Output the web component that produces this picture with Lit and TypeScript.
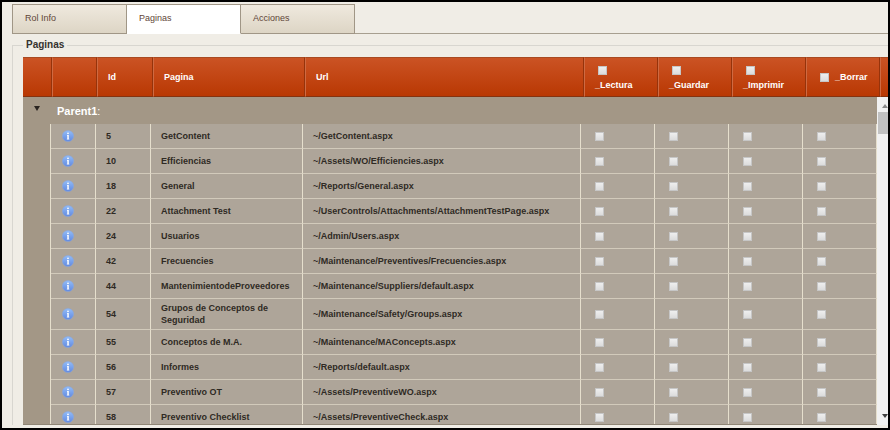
import { LitElement, html, css, svg } from "lit";
import { customElement, state } from "lit/decorators.js";

interface Page { id: number; name: string; url: string }

const PAGES: Page[] = [
  { id: 5, name: "GetContent", url: "~/GetContent.aspx" },
  { id: 10, name: "Efficiencias", url: "~/Assets/WO/Efficiencies.aspx" },
  { id: 18, name: "General", url: "~/Reports/General.aspx" },
  { id: 22, name: "Attachment Test", url: "~/UserControls/Attachments/AttachmentTestPage.aspx" },
  { id: 24, name: "Usuarios", url: "~/Admin/Users.aspx" },
  { id: 42, name: "Frecuencies", url: "~/Maintenance/Preventives/Frecuencies.aspx" },
  { id: 44, name: "MantenimientodeProveedores", url: "~/Maintenance/Suppliers/default.aspx" },
  { id: 54, name: "Grupos de Conceptos de Seguridad", url: "~/Maintenance/Safety/Groups.aspx" },
  { id: 55, name: "Conceptos de M.A.", url: "~/Maintenance/MAConcepts.aspx" },
  { id: 56, name: "Informes", url: "~/Reports/default.aspx" },
  { id: 57, name: "Preventivo OT", url: "~/Assets/PreventiveWO.aspx" },
  { id: 58, name: "Preventivo Checklist", url: "~/Assets/PreventiveCheck.aspx" },
];

const RIGHTS = ["_Lectura", "_Guardar", "_Imprimir", "_Borrar"];
const TABS = ["Rol Info", "Paginas", "Acciones"];

const infoIcon = html`<svg class="info" viewBox="0 0 12 12" aria-hidden="true">
  ${svg`<defs><linearGradient id="g" x1="0" y1="0" x2="0" y2="1">
    <stop offset="0" stop-color="#93bdf8" /><stop offset="1" stop-color="#6189e0" />
  </linearGradient></defs>
  <circle cx="6" cy="6" r="5.6" fill="url(#g)" stroke="#86a6e0" stroke-width="0.5" />
  <circle cx="6" cy="3.3" r="0.9" fill="#fff" />
  <path d="M5 5h1.800v3.800h.5v.7H4.800v-.7h.5V5.700H5z" fill="#fff" />`}
</svg>`;

@customElement("app-root")
export class AppRoot extends LitElement {
  @state() private active = 1;
  @state() private open = true;

  static styles = css`
    :host {
      display: block;
      box-sizing: border-box;
      height: 100vh;
      overflow: hidden;
      border: 2px solid #000;
      background: #f0ede6;
      color: #2f2a24;
      font: 9px/12px "Liberation Sans", Arial, sans-serif;
    }
    *, *::before, *::after { box-sizing: border-box; }
    button { font: inherit; color: inherit; border: 0; padding: 0; background: none; }
    .screen { display: flex; flex-direction: column; height: 100%; padding: 2px 0 3px 10px; }

    .tabs { display: flex; flex: none; height: 30px; }
    .tabs::after { content: ""; flex: 1; border-bottom: 1px solid #a79f90; }
    .tab {
      flex: none;
      width: 114px;
      padding: 0 12px 2px;
      text-align: left;
      color: #5f4638;
      border: 1px solid #a09686;
      border-left-width: 0;
      background: linear-gradient(#efe9de, #ddd5c5);
    }
    .tab:first-child { border-left-width: 1px; width: 115px; }
    .tab.on { background: #fff; border-bottom-color: #fff; }

    .group {
      flex: 1;
      display: flex;
      min-width: 0;
      min-height: 0;
      margin: 5px 0 0;
      padding: 6px 0 0 10px;
      border: 1px solid #d8d6d0;
      border-width: 1px 0 0 1px;
    }
    .group legend {
      margin: 0;
      padding: 0 3px;
      font-size: 10px;
      font-weight: bold;
      color: #35322e;
    }
    .grid { width: 100%; height: 100%; display: flex; flex-direction: column; overflow: hidden; }
    .body { display: flex; flex: 1; min-height: 0; }
    .rows { flex: 1; min-width: 0; overflow: hidden; background: #a39786; border-bottom: 1px solid #8f8575; }

    table { width: 100%; table-layout: fixed; border-collapse: separate; border-spacing: 0; }
    th, td { padding: 0 0 0 10px; text-align: left; vertical-align: middle; font-weight: bold; }
    .toggle { width: 28px; }
    .detail { width: 45px; }
    .id { width: 55px; }
    .name { width: 152px; }
    .right { width: 74px; }
    .head .toggle { width: 29px; }
    .head .id { width: 56px; }
    .head .gutter { width: 8px; }
    .head th {
      height: 40px;
      color: #fff;
      background: linear-gradient(#cb5324, #b93803);
      border-top: 1px solid #a84a22;
      border-bottom: 1px solid #85320f;
      border-left: 1px solid #cf6a42;
      border-right: 1px solid #96330b;
    }
    .head th.gutter { border-right: 0; padding: 0; }
    .head th:first-child { border-left: 0; }
    .head th.pick { padding-right: 10px; }
    .all { display: flex; flex-wrap: wrap; align-items: center; column-gap: 6px; row-gap: 2px; }
    .all input { margin: 2px 0 2px 3px; }
    .rows .parent { height: 27px; padding: 0 0 0 6px; color: #fff; font-size: 11px; }
    .parent span { font-weight: normal; }
    .rows .toggle { padding: 0; text-align: center; background: #a39786; }
    .item td {
      height: 25px;
      background: #aea599;
      border-right: 1px solid #e6dfcd;
      border-bottom: 1px solid #d2cabb;
    }
    .item td.toggle { border-bottom: 0; }
    .item.tall td { height: 31px; }
    .item input { margin-left: 4px; }
    .arrow { display: flex; align-items: flex-start; justify-content: center; margin: 0 auto; width: 16px; height: 10px; }
    .arrow::before {
      content: "";
      border: 3px solid transparent;
      border-top: 5px solid #2a2521;
      border-bottom: 0;
    }
    .info { display: block; width: 12px; height: 12px; margin-left: 1px; }
    input {
      appearance: none;
      display: block;
      flex: none;
      width: 9px;
      height: 9px;
      margin: 0;
      border: 1px solid #c6c6c6;
      background: linear-gradient(#eee, #dcdcdc);
    }
    input:checked { background: #555; }

    .bar {
      flex: none;
      display: flex;
      flex-direction: column;
      width: 11px;
      overflow: hidden;
      background: #f1f1f1;
      padding: 7px 0;
    }
    .up, .down { flex: none; width: 0; margin-left: 5px; border: 3px solid transparent; }
    .up { border-bottom: 4px solid #8a8a8a; border-top: 0; }
    .down { border-top: 4px solid #404040; border-bottom: 0; }
    .thumb { height: 22px; margin: 4px 0 auto 1px; background: #c1c1c1; }
  `;

  private cols(head: boolean) {
    return html`<colgroup>
      <col class="toggle" /><col class="detail" /><col class="id" /><col class="name" /><col />
      ${RIGHTS.map(() => html`<col class="right" />`)}
      ${head ? html`<col class="gutter" />` : ""}
    </colgroup>`;
  }

  render() {
    return html`<div class="screen">
      <div class="tabs" role="tablist">
        ${TABS.map((t, i) => html`<button role="tab" aria-selected=${this.active === i}
          class="tab ${this.active === i ? "on" : ""}" @click=${() => (this.active = i)}>${t}</button>`)}
      </div>
      <fieldset class="group">
        <legend>Paginas</legend>
        <div class="grid">
          <table class="head">
            ${this.cols(true)}
            <thead><tr>
              <th></th><th></th><th>Id</th><th>Pagina</th><th>Url</th>
              ${RIGHTS.map((r) => html`<th class="pick"><label class="all"><input type="checkbox" /><span>${r}</span></label></th>`)}
              <th class="gutter"></th>
            </tr></thead>
          </table>
          <div class="body">
            <div class="rows">
              <table>
                ${this.cols(false)}
                <tbody>
                  <tr>
                    <td class="toggle"><button class="arrow" aria-label="Parent1" aria-expanded=${this.open}
                      @click=${() => (this.open = !this.open)}></button></td>
                    <td class="parent" colspan="8">Parent1<span>:</span></td>
                  </tr>
                  ${this.open ? PAGES.map((p) => html`<tr class="item ${p.name.length > 30 ? "tall" : ""}">
                    <td class="toggle"></td><td>${infoIcon}</td><td>${p.id}</td><td>${p.name}</td><td>${p.url}</td>
                    ${RIGHTS.map((r) => html`<td><input type="checkbox" aria-label="${p.name} ${r}" /></td>`)}
                  </tr>`) : ""}
                </tbody>
              </table>
            </div>
            <div class="bar"><div class="up"></div><div class="thumb"></div><div class="down"></div></div>
          </div>
        </div>
      </fieldset>
    </div>`;
  }
}
